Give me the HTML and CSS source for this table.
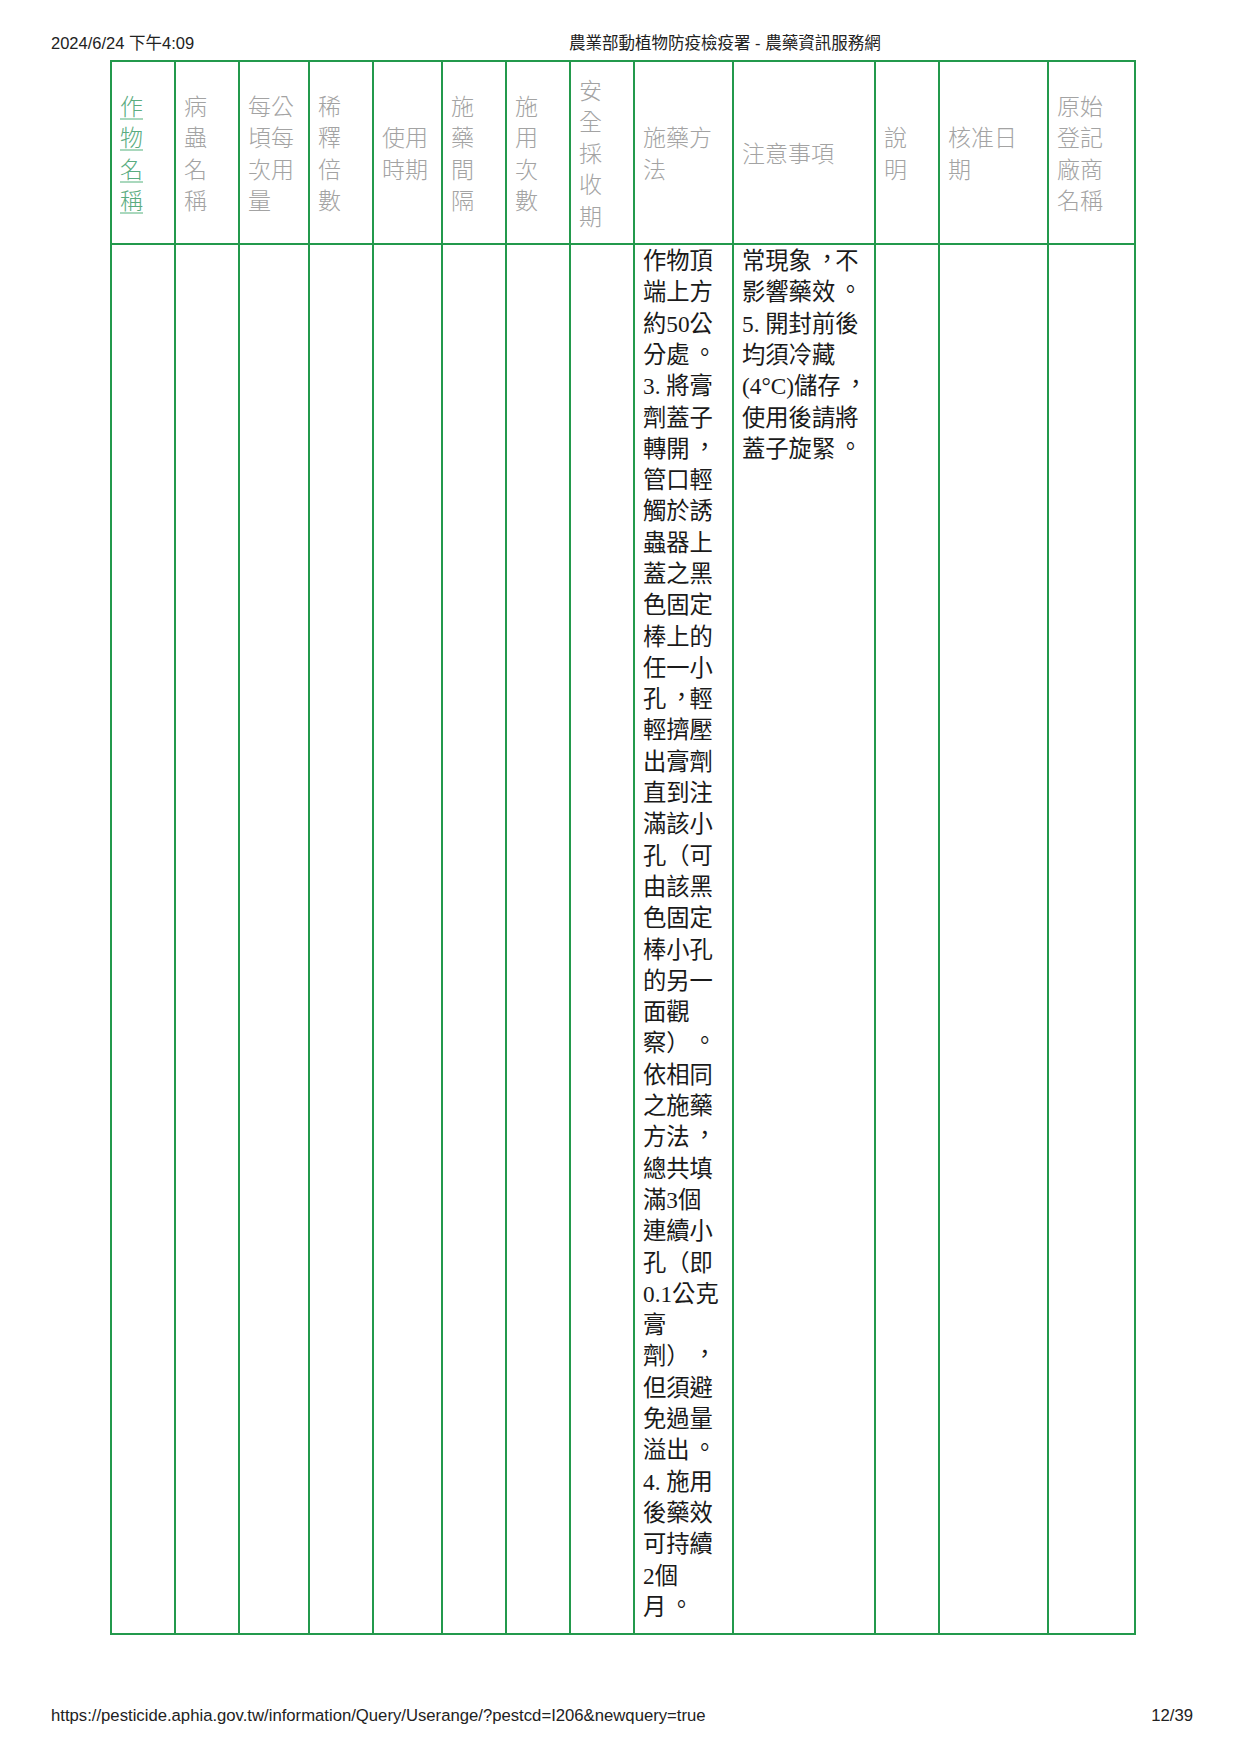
FILE: index.html
```html
<!DOCTYPE html>
<html lang="zh-TW">
<head>
<meta charset="utf-8">
<title>農業部動植物防疫檢疫署 - 農藥資訊服務網</title>
<link rel="stylesheet" href="styles.css">
</head>
<body>
<div class="page">
  <header class="print-head">
    <span class="print-date">2024/6/24 下午4:09</span>
    <span class="print-title">農業部動植物防疫檢疫署 - 農藥資訊服務網</span>
  </header>

  <table class="range">
    <colgroup>
      <col class="w64"><col class="w64"><col class="w70"><col class="w64"><col class="w69"><col class="w64"><col class="w64"><col class="w64"><col class="w99"><col class="w142"><col class="w64"><col class="w109"><col class="w87">
    </colgroup>
    <thead>
      <tr>
        <th><a class="sort-link" href="#">作<br>物<br>名<br>稱</a></th>
        <th>病<br>蟲<br>名<br>稱</th>
        <th>每公<br>頃每<br>次用<br>量</th>
        <th>稀<br>釋<br>倍<br>數</th>
        <th>使用<br>時期</th>
        <th>施<br>藥<br>間<br>隔</th>
        <th>施<br>用<br>次<br>數</th>
        <th>安<br>全<br>採<br>收<br>期</th>
        <th>施藥方<br>法</th>
        <th>注意事項</th>
        <th>說<br>明</th>
        <th>核准日<br>期</th>
        <th>原始<br>登記<br>廠商<br>名稱</th>
      </tr>
    </thead>
    <tbody>
      <tr>
        <td></td>
        <td></td>
        <td></td>
        <td></td>
        <td></td>
        <td></td>
        <td></td>
        <td></td>
        <td>作物頂<br>端上方<br>約50公<br>分處<span class="pc">。</span><br>3. 將膏<br>劑蓋子<br>轉開<span class="pc">，</span><br>管口輕<br>觸於誘<br>蟲器上<br>蓋之黑<br>色固定<br>棒上的<br>任一小<br>孔<span class="pc">，</span>輕<br>輕擠壓<br>出膏劑<br>直到注<br>滿該小<br>孔（可<br>由該黑<br>色固定<br>棒小孔<br>的另一<br>面觀<br>察）<span class="pc">。</span><br>依相同<br>之施藥<br>方法<span class="pc">，</span><br>總共填<br>滿3個<br>連續小<br>孔（即<br>0.1公克<br>膏<br>劑）<span class="pc">，</span><br>但須避<br>免過量<br>溢出<span class="pc">。</span><br>4. 施用<br>後藥效<br>可持續<br>2個<br>月<span class="pc">。</span></td>
        <td>常現象<span class="pc">，</span>不<br>影響藥效<span class="pc">。</span><br>5. 開封前後<br>均須冷藏<br>(4°C)儲存<span class="pc">，</span><br>使用後請將<br>蓋子旋緊<span class="pc">。</span></td>
        <td></td>
        <td></td>
        <td></td>
      </tr>
    </tbody>
  </table>

  <footer class="print-foot">
    <span class="print-url">https://pesticide.aphia.gov.tw/information/Query/Userange/?pestcd=I206&amp;newquery=true</span>
    <span class="print-page">12/39</span>
  </footer>
</div>
</body>
</html>
```

FILE: styles.css
```css
html, body {
  margin: 0;
  padding: 0;
  background: #fff;
}

.page {
  width: 1241px;
  min-height: 1755px;
  box-sizing: border-box;
  display: flex;
  flex-direction: column;
}

.print-head {
  display: flex;
  align-items: center;
  height: 60px;
  box-sizing: border-box;
  padding: 33px 0 7px 51px;
  font-family: "Liberation Sans", "Noto Sans CJK TC", sans-serif;
  color: #222;
}

.print-date {
  font-size: 16.5px;
  line-height: 20px;
  width: 518px;
  white-space: nowrap;
}

.print-title {
  font-size: 16.5px;
  line-height: 20px;
  white-space: nowrap;
}

.range {
  margin-left: 110px;
  width: 1025px;
  table-layout: fixed;
  border-collapse: collapse;
}

.w64 { width: 64px; }
.w69 { width: 69px; }
.w70 { width: 70px; }
.w87 { width: 87px; }
.w99 { width: 99px; }
.w109 { width: 109px; }
.w142 { width: 142px; }

.range th,
.range td {
  border: 2px solid #23994c;
  text-align: left;
  padding: 0 8px;
}

.range th {
  font-family: "Noto Sans CJK TC", "Noto Sans", sans-serif;
  font-weight: 300;
  font-size: 23px;
  line-height: 31.4px;
  color: #a3a3a3;
  vertical-align: middle;
  padding-top: 12px;
  padding-bottom: 12px;
  height: 157px;
  white-space: nowrap;
}

.sort-link {
  color: #5aac80;
  text-decoration: underline;
  text-decoration-color: #a9d8bd;
  text-underline-offset: 3px;
}

.range td {
  font-family: "Liberation Serif", "Noto Sans CJK TC", serif;
  font-size: 23.3px;
  line-height: 31.3px;
  color: #1a1a1a;
  vertical-align: top;
  padding-top: 1px;
  padding-bottom: 10px;
  white-space: nowrap;
}

/* Traditional-Chinese style centred full-width punctuation */
.pc {
  display: inline-block;
  transform: translate(0.15em, -0.1em);
}

.print-foot {
  margin-top: auto;
  display: flex;
  justify-content: space-between;
  padding: 0 48px 29px 51px;
  font-family: "Liberation Sans", sans-serif;
  font-size: 16.7px;
  line-height: 20px;
  color: #222;
}
```
